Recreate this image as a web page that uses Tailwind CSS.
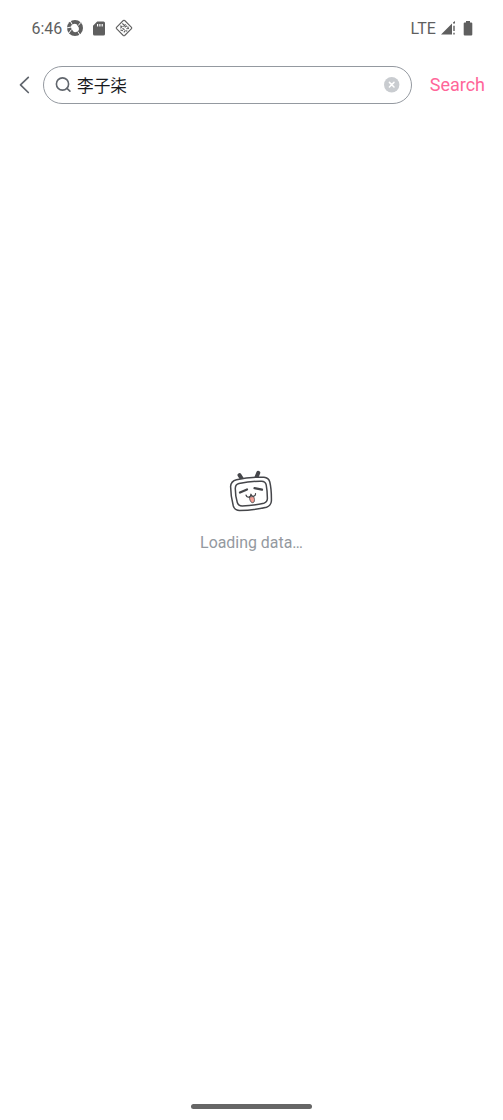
<!DOCTYPE html>
<html lang="en">
<head>
<meta charset="utf-8">
<title>Search</title>
<script src="https://cdn.jsdelivr.net/npm/@tailwindcss/browser@4"></script>
</head>
<body class="bg-white">
<div class="flex h-[1120px] w-[503px] flex-col overflow-hidden bg-white font-['Roboto','Noto_Sans_CJK_SC',sans-serif]">
  <header class="flex h-14 shrink-0 items-center pl-[31.500px] pr-[30px] text-[#5f5f5f]">
    <span class="w-[34px] pt-[2px] text-[16px] leading-5">6:46</span>
    <svg class="size-[18px]" viewBox="0 0 18 18">
      <circle cx="9" cy="9" r="8" fill="currentColor"/>
      <path d="M6.800 5.200Q9 4.200 10.600 5.300L12.700 8.600Q13.600 10.400 12.200 12.100L10.800 12.800Q9 13.700 7.300 12.500L5.200 9.300Q4.400 7.300 5.700 5.900z" fill="#fff"/>
      <path d="M6.200 5.500L4.300 2M12.300 6.500L14.800 3.300M11.800 12.500L14 16M5.500 10.500L2.500 14.500M5.300 8L.5 9" stroke="#fff" stroke-width="1"/>
    </svg>
    <svg class="ml-[9px] h-[15px] w-[12px]" viewBox="0 0 12 15" fill="currentColor">
      <path fill-rule="evenodd" d="M4.200.5h6.300Q12 .5 12 2v11q0 1.500-1.500 1.500h-9Q0 14.500 0 13V4.700zM4 3v2.500h1.200V3zM6.300 3v2.500h1.200V3zM8.600 3v2.500h1.200V3z"/>
    </svg>
    <svg class="ml-[10px] size-[18px]" viewBox="0 0 18 18" fill="none" stroke="currentColor" stroke-width="1.100">
      <path d="M8.300 1.500q.7-.6 1.400 0l6.800 6.800q.6.7 0 1.400l-6.800 6.800q-.7.6-1.400 0L1.500 9.700q-.6-.7 0-1.400z"/>
      <path d="M7.300 4.500l2 1.700M10.700 5.400L8.400 7.700M5 7l2 .3-1.500 2M9.700 8.300l2.300-1.500M12.700 7.500l.7 2-2.100.2M7.500 9.300l2 1.500M5.400 11l2.500.6M10.500 11.300l-1.700 2M11.200 12.400l1-.9"/>
    </svg>
    <span class="ml-auto pt-[2px] text-[16px] leading-5 tracking-[0.1px]">LTE</span>
    <svg class="ml-[5px] h-[14px] w-[15px]" viewBox="0 0 15 14" fill="currentColor">
      <path d="M0 13.500L11 2.400v11.100zM12 1.400L14 0v2.500h-2zM12.300 4.800h1.400v5.200h-1.400zM12.300 11.800h1.400v1.700h-1.400z"/>
    </svg>
    <svg class="ml-[7px] h-[15px] w-[10px]" viewBox="0 0 10 15" fill="currentColor">
      <path d="M3 0h4v1.500h1.200q1.100 0 1.100 1.100v10.800q0 1.100-1.100 1.100H1.800q-1.100 0-1.100-1.100V2.600q0-1.100 1.100-1.100H3z"/>
    </svg>
  </header>

  <div class="flex h-[57px] shrink-0 items-center pl-[18px] pr-[18px]">
    <svg class="h-[18px] w-[12px]" viewBox="0 0 12 18" fill="none" stroke="#61666d" stroke-width="1.700" stroke-linecap="round" stroke-linejoin="round"><path d="M10.300 1.300L2.500 8.800 10.300 16.500"/></svg>
    <div class="ml-[13px] flex h-[38px] w-[369px] items-center rounded-full border border-[#9499a0] pl-[11px] pr-[11px]">
      <svg class="size-4" viewBox="0 0 16 16" fill="none" stroke="#61666d" stroke-width="1.600" stroke-linecap="round"><circle cx="7.500" cy="7" r="6.100"/><path d="M12 11.400l2.900 2.800"/></svg>
      <span class="ml-[6px] pt-[4px] text-[16.700px] leading-6 text-[#18191c]">李子柒</span>
      <svg class="ml-auto size-4" viewBox="0 0 16 16"><circle cx="7.700" cy="7.700" r="7.700" fill="#c9ccd0"/><path d="M5.400 5.400l4.600 4.600M10 5.400l-4.600 4.600" stroke="#fff" stroke-width="1.500" stroke-linecap="round"/></svg>
    </div>
    <span class="ml-auto pt-px text-[18px] leading-6 text-[#ff6699]">Search</span>
  </div>

  <main class="flex flex-1 flex-col items-center pt-[355px]">
    <svg class="h-[46px] w-[46px]" viewBox="229 468 46 46" fill="none" stroke="#45464a" stroke-linecap="round" stroke-linejoin="round">
      <path d="M239.500 475.200l2.500 3.800M258.300 472.800l-1.700 4.200" stroke-width="4"/>
      <path d="M236.500 479.800Q250 476.600 264 477.300Q268.600 477.700 269.800 482Q271.600 489.500 271.400 501Q271 505.800 266.500 507.200Q253 510.300 239.500 510.500Q234.600 510.300 233.300 506Q230.700 496 230.600 486.500Q231 481.200 236.500 479.800z" stroke-width="1.500" fill="#fff"/>
      <path d="M239 483.600Q251 481 261.500 481.200Q265.500 481.400 266.200 484.800Q267.400 491 267.400 498.500Q267.200 502.200 263.800 503.200Q253 505.800 242.200 506Q238.400 505.900 237.300 502.500Q235.200 495.500 235.300 488.200Q235.500 484.500 239 483.600z" stroke-width="1.500"/>
      <path d="M240 492.500l7-3M254.500 488.200l7.500 1.500" stroke-width="2.200"/>
      <path d="M249.400 497l4.300-.5q1.300 3.200.5 5.300-1.200 1.600-2.900.5-1.800-1.600-1.900-5.300z" fill="#f5a096" stroke-width=".8"/>
      <path d="M246 495q.6 2.500 2.600 2.200 2.100-.3 2.300-3 1 2.500 2.900 2 2-.5 1.700-2.700" stroke-width="1.200"/>
    </svg>
    <p class="mt-[18px] text-[15.900px] leading-[22px] text-[#9499a0]">Loading data…</p>
  </main>

  <div class="flex h-[18px] shrink-0 justify-center pt-[2px]">
    <div class="h-[5px] w-[121px] rounded-full bg-[#666]"></div>
  </div>
</div>
</body>
</html>
